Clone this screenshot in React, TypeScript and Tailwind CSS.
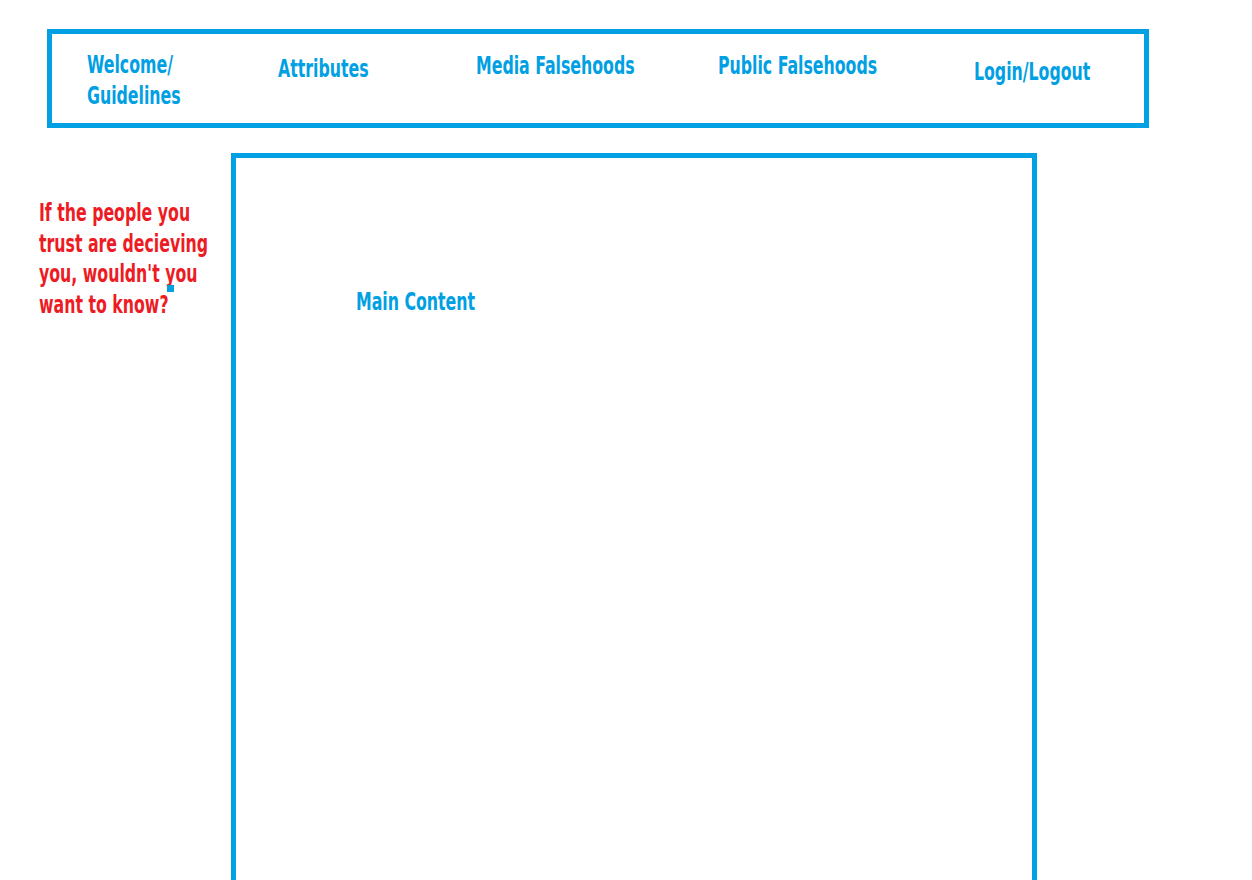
const App = () => {
  return (
    <div className="min-h-[880px] bg-white overflow-hidden font-['DejaVu_Sans_Condensed','DejaVu_Sans',sans-serif] font-bold">
      <div className="pt-[29px] pl-[47px]">
        <nav className="w-[1102px] h-[99px] border-[5px] border-[#00a0e3] flex items-start pl-[35px] text-[#00a0e3] text-[24px] leading-[31px]">
          <div className="w-[191px] pt-[16px]">
            <span className="inline-block origin-left scale-x-[0.73] whitespace-nowrap">Welcome/</span>
            <br />
            <span className="inline-block origin-left scale-x-[0.73] whitespace-nowrap">Guidelines</span>
          </div>
          <div className="w-[198px] pt-[20px]">
            <span className="inline-block origin-left scale-x-[0.73] whitespace-nowrap">Attributes</span>
          </div>
          <div className="w-[242px] pt-[17px]">
            <span className="inline-block origin-left scale-x-[0.73] whitespace-nowrap">Media Falsehoods</span>
          </div>
          <div className="w-[256px] pt-[17px]">
            <span className="inline-block origin-left scale-x-[0.73] whitespace-nowrap">Public Falsehoods</span>
          </div>
          <div className="pt-[23px]">
            <span className="inline-block origin-left scale-x-[0.73] whitespace-nowrap">Login/Logout</span>
          </div>
        </nav>
      </div>
      <div className="flex items-start pt-[25px]">
        <aside className="relative w-[231px] pl-[39px] pt-[45px]">
          <p className="w-[240px] origin-top-left scale-x-[0.73] text-[#ed1c24] text-[24px] leading-[30.7px]">
            If the people you trust are decieving you, wouldn't you want to know?
          </p>
          <span className="absolute left-[167px] top-[132px] w-[7px] h-[7px] bg-[#00a0e3]" />
        </aside>
        <main className="w-[806px] h-[760px] border-[5px] border-[#00a0e3] pl-[120px] pt-[129px]">
          <h1 className="text-[#00a0e3] text-[24px] leading-[30px]">
            <span className="inline-block origin-left scale-x-[0.73] whitespace-nowrap">Main Content</span>
          </h1>
        </main>
      </div>
    </div>
  )
}

export default App
